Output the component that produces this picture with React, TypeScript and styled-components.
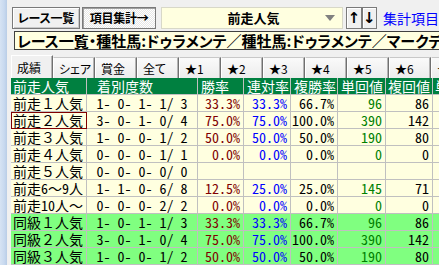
import React from "react";
import styled, { createGlobalStyle, css } from "styled-components";

const UI_FONT = `"Noto Sans CJK JP", "Noto Sans", sans-serif`;
const GRID_FONT = `"Noto Sans Mono CJK JP", "Noto Sans CJK JP", monospace`;

const Global = createGlobalStyle`
  html, body { margin: 0; padding: 0; background: #f0f0f0; }
  #root { width: 439px; height: 265px; overflow: hidden; }
`;

const Frame = styled.div`
  display: flex;
  width: 439px;
  height: 265px;
  overflow: hidden;
  background: #f0f0f0;
  font-family: ${UI_FONT};
`;

const SideStrip = styled.div`
  flex: 0 0 7px;
  background: linear-gradient(90deg, #d6e3f3 0, #c8d9ef 60%, #b9cde6 100%);
`;

const Main = styled.div`
  flex: 1 1 auto;
  min-width: 0;
  padding-left: 4px;
  display: flex;
  flex-direction: column;
`;

const Toolbar = styled.div`
  display: flex;
  align-items: center;
  height: 22px;
  margin-top: 7px;
  padding-left: 1px;
  white-space: nowrap;
`;

const ToolButton = styled.div<{ $pressed?: boolean }>`
  box-sizing: border-box;
  height: 22px;
  width: ${(p) => (p.$pressed ? 78 : 71)}px;
  margin-right: ${(p) => (p.$pressed ? 5 : 2)}px;
  display: flex;
  align-items: center;
  justify-content: center;
  font-size: 12px;
  letter-spacing: -0.2px;
  line-height: 16px;
  font-weight: bold;
  color: #000;
  font-feature-settings: "palt";
  border: 1px solid #7a7a7a;
  ${(p) =>
    p.$pressed
      ? css`
          background: repeating-conic-gradient(#ffffff 0 25%, #e6e6e6 0 50%) 0 0 / 2px 2px;
          box-shadow: inset 1px 1px 0 #a0a0a0;
        `
      : css`
          background: #f0f0f0;
          box-shadow: inset 1px 1px 0 #ffffff, inset -1px -1px 0 #c8c8c8;
        `}
`;

const Combo = styled.div`
  box-sizing: border-box;
  width: 187px;
  height: 22px;
  margin-right: 3px;
  display: flex;
  align-items: center;
  background: #ffffe0;
  border: 1px solid #d8d8c8;
  padding-left: 65px;
  padding-right: 7px;
`;

const ComboText = styled.span`
  flex: 1 1 auto;
  font-size: 13px;
  line-height: 16px;
  font-weight: bold;
  color: #000;
`;

const ComboArrow = styled.span`
  width: 0;
  height: 0;
  border-left: 5px solid transparent;
  border-right: 5px solid transparent;
  border-top: 6px solid #808080;
`;

const ArrowButton = styled.div`
  box-sizing: border-box;
  width: 16px;
  height: 22px;
  display: flex;
  align-items: center;
  justify-content: center;
  font-size: 15px;
  line-height: 18px;
  font-weight: bold;
  color: #000;
  background: #f0f0f0;
  border: 1px solid #7a7a7a;
  box-shadow: inset 1px 1px 0 #ffffff;
  font-family: "DejaVu Sans", sans-serif;
`;

const LinkText = styled.span`
  margin-left: 6px;
  font-size: 14px;
  line-height: 18px;
  color: #0000ff;
`;

const TitleBox = styled.div`
  box-sizing: border-box;
  height: 20px;
  margin: 2px -30px 0 3px;
  background: #ffffe0;
  border: 1px solid #404040;
  display: flex;
  align-items: center;
  padding-left: 2px;
  font-size: 15px;
  line-height: 18px;
  font-weight: bold;
  color: #000;
  white-space: nowrap;
  overflow: hidden;
  font-feature-settings: "palt";
`;

const TabStrip = styled.div`
  display: flex;
  align-items: flex-end;
  height: 23px;
  margin-top: 5px;
  white-space: nowrap;
`;

const Tab = styled.div<{ $active?: boolean }>`
  box-sizing: border-box;
  flex: 0 0 42px;
  height: ${(p) => (p.$active ? 23 : 21)}px;
  padding-left: 5px;
  display: flex;
  align-items: center;
  font-size: 12px;
  line-height: 15px;
  color: #000;
  background: ${(p) =>
    p.$active ? "#f0f0f0" : "linear-gradient(#fafafa, #ececec)"};
  border-top: 1px solid ${(p) => (p.$active ? "#ffffff" : "#c8c8c8")};
  border-left: 1px solid #ffffff;
  border-right: 1px solid #707070;
  box-shadow: inset -1px 0 0 #b4b4b4;
  font-feature-settings: "palt";
`;

const Table = styled.div`
  display: grid;
  grid-template-columns: 76px 111px 46px 47px 47px 48px 47px 60px;
  grid-auto-rows: 17px;
  font-family: ${GRID_FONT};
  font-size: 14px;
  white-space: pre;
`;

type Align = "left" | "center" | "right";

const Cell = styled.div<{
  $bg: string;
  $fg?: string;
  $align?: Align;
  $pad?: number;
  $selected?: boolean;
}>`
  box-sizing: border-box;
  border-right: 1px solid #c0c0c0;
  border-bottom: 1px solid #c0c0c0;
  background: ${(p) => p.$bg};
  color: ${(p) => p.$fg ?? "#000"};
  line-height: 16px;
  overflow: hidden;
  text-align: ${(p) => p.$align ?? "left"};
  padding: ${(p) =>
    p.$align === "right" ? `0 ${p.$pad ?? 3}px 0 0` : `0 0 0 ${p.$pad ?? 2}px`};
  ${(p) =>
    p.$selected &&
    css`
      outline: 1px solid #800000;
      outline-offset: -1px;
    `}
`;

const HEADER_BG = "#008040";
const YELLOW = "#ffffe0";
const GREEN = "#80ff80";

const headers: { text: string; pad: number }[] = [
  { text: "前走人気", pad: 2 },
  { text: "着別度数", pad: 10 },
  { text: "勝率", pad: 3 },
  { text: "連対率", pad: 3 },
  { text: "複勝率", pad: 3 },
  { text: "単回値", pad: 3 },
  { text: "複回値", pad: 2 },
  { text: "単適回値", pad: 2 },
];

type Row = {
  label: string;
  count: string;
  win?: string;
  ren?: string;
  fuku?: string;
  tan?: string;
  fkai?: string;
  green?: boolean;
  selected?: boolean;
};

const rows: Row[] = [
  { label: "前走１人気", count: "1- 0- 1- 1/ 3", win: "33.3%", ren: "33.3%", fuku: "66.7%", tan: "96", fkai: "86" },
  { label: "前走２人気", count: "3- 0- 1- 0/ 4", win: "75.0%", ren: "75.0%", fuku: "100.0%", tan: "390", fkai: "142", selected: true },
  { label: "前走３人気", count: "1- 0- 0- 1/ 2", win: "50.0%", ren: "50.0%", fuku: "50.0%", tan: "190", fkai: "80" },
  { label: "前走４人気", count: "0- 0- 0- 1/ 1", win: "0.0%", ren: "0.0%", fuku: "0.0%", tan: "0", fkai: "0" },
  { label: "前走５人気", count: "0- 0- 0- 0/ 0" },
  { label: "前走6～9人", count: "1- 1- 0- 6/ 8", win: "12.5%", ren: "25.0%", fuku: "25.0%", tan: "145", fkai: "71" },
  { label: "前走10人～", count: "0- 0- 0- 2/ 2", win: "0.0%", ren: "0.0%", fuku: "0.0%", tan: "0", fkai: "0" },
  { label: "同級１人気", count: "1- 0- 1- 1/ 3", win: "33.3%", ren: "33.3%", fuku: "66.7%", tan: "96", fkai: "86", green: true },
  { label: "同級２人気", count: "3- 0- 1- 0/ 4", win: "75.0%", ren: "75.0%", fuku: "100.0%", tan: "390", fkai: "142", green: true },
  { label: "同級３人気", count: "1- 0- 0- 1/ 2", win: "50.0%", ren: "50.0%", fuku: "50.0%", tan: "190", fkai: "80", green: true },
];

const tabs = ["成績", "シェア", "賞金", "全て", "★1", "★2", "★3", "★4", "★5", "★6", "★7"];

export default function App() {
  return (
    <>
      <Global />
      <Frame>
        <SideStrip />
        <Main>
          <Toolbar>
            <ToolButton>レース一覧</ToolButton>
            <ToolButton $pressed>項目集計→</ToolButton>
            <Combo>
              <ComboText>前走人気</ComboText>
              <ComboArrow />
            </Combo>
            <ArrowButton>↑</ArrowButton>
            <ArrowButton>↓</ArrowButton>
            <LinkText>集計項目</LinkText>
          </Toolbar>
          <TitleBox>レース一覧・種牡馬:ドゥラメンテ／種牡馬:ドゥラメンテ／マークデー</TitleBox>
          <TabStrip>
            {tabs.map((t, i) => (
              <Tab key={t} $active={i === 0}>
                {t}
              </Tab>
            ))}
          </TabStrip>
          <Table>
            {headers.map((h) => (
              <Cell key={h.text} $bg={HEADER_BG} $fg="#ffffff" $pad={h.pad}>
                {h.text}
              </Cell>
            ))}
            {rows.map((r) => {
              const bg = r.green ? GREEN : YELLOW;
              return (
                <React.Fragment key={r.label}>
                  <Cell $bg={bg} $selected={r.selected}>{r.label}</Cell>
                  <Cell $bg={bg} $align="center" $pad={0}>{r.count}</Cell>
                  <Cell $bg={bg} $fg="#800000" $align="right">{r.win ?? ""}</Cell>
                  <Cell $bg={bg} $fg="#0000ff" $align="right">{r.ren ?? ""}</Cell>
                  <Cell $bg={bg} $align="right">{r.fuku ?? ""}</Cell>
                  <Cell $bg={bg} $fg="#008000" $align="right">{r.tan ?? ""}</Cell>
                  <Cell $bg={bg} $align="right">{r.fkai ?? ""}</Cell>
                  <Cell $bg={bg} />
                </React.Fragment>
              );
            })}
          </Table>
        </Main>
      </Frame>
    </>
  );
}
